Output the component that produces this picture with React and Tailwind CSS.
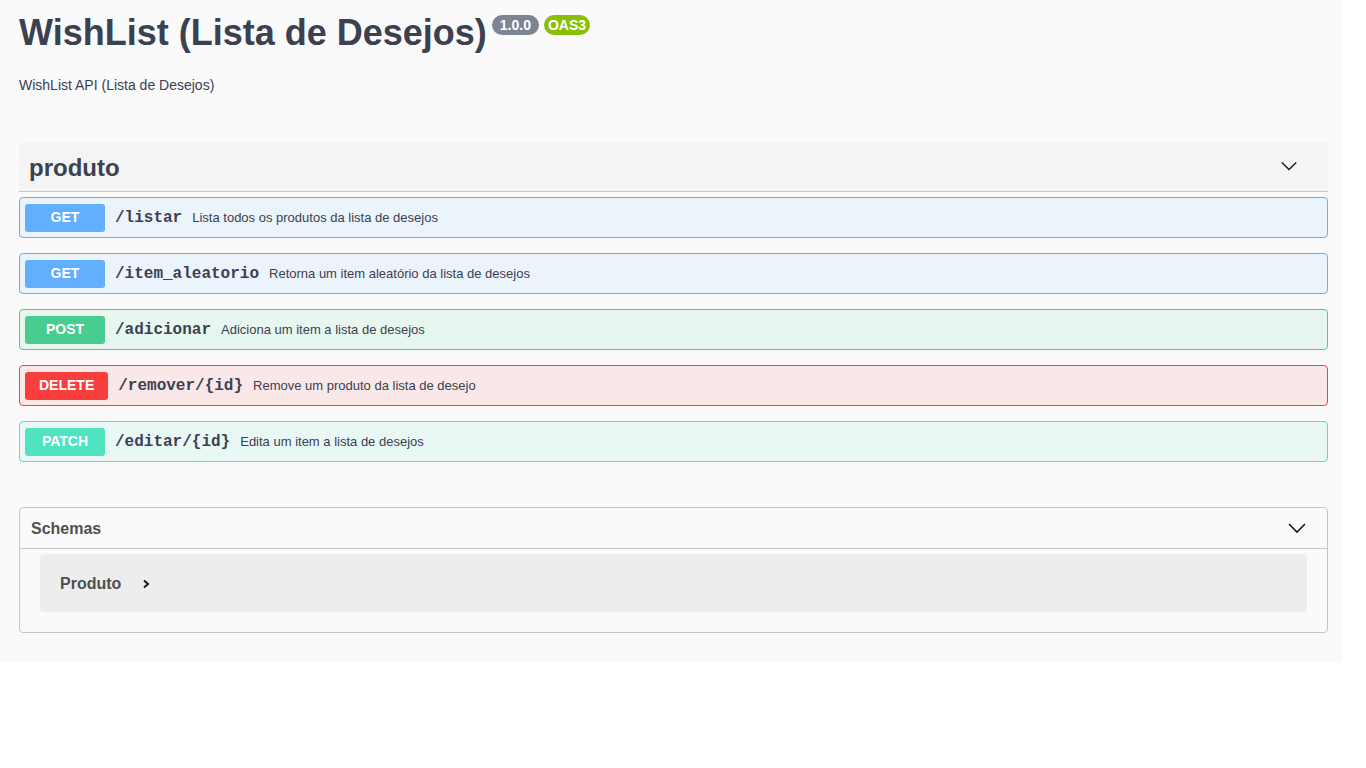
const ops = [
  { method: "GET", path: "/listar", desc: "Lista todos os produtos da lista de desejos", color: "border-[#61affe] bg-[#ebf3fb]", badge: "bg-[#61affe]" },
  { method: "GET", path: "/item_aleatorio", desc: "Retorna um item aleatório da lista de desejos", color: "border-[#61affe] bg-[#ebf3fb]", badge: "bg-[#61affe]" },
  { method: "POST", path: "/adicionar", desc: "Adiciona um item a lista de desejos", color: "border-[#49cc90] bg-[#e8f6f0]", badge: "bg-[#49cc90]" },
  { method: "DELETE", path: "/remover/{id}", desc: "Remove um produto da lista de desejo", color: "border-[#f93e3e] bg-[#fae7e7]", badge: "bg-[#f93e3e]" },
  { method: "PATCH", path: "/editar/{id}", desc: "Edita um item a lista de desejos", color: "border-[#50e3c2] bg-[#e9f8f5]", badge: "bg-[#50e3c2]" },
];

const ChevronDown = ({ className }) => (
  <svg className={className} viewBox="0 0 20 20" fill="none" stroke="#1a1a1a" strokeWidth="1.6">
    <path d="M2 6 L10 14 L18 6" />
  </svg>
);

const App = () => {
  return (
    <div className="bg-white min-h-[768px] font-['Liberation_Sans',Arial,sans-serif] text-[#3b4151]">
      <div className="w-[1342px] bg-[#fafafa] pl-[19px] pr-[14px] pt-[12px] pb-[29px]">
        <div className="flex items-start">
          <h2 className="text-[36px] font-bold leading-[41px]">WishList (Lista de Desejos)</h2>
          <span className="ml-[5px] mt-[3px] h-[20px] px-[8px] rounded-full bg-[#7d8492] text-white text-[14px] font-bold leading-[20px]">1.0.0</span>
          <span className="ml-[5px] mt-[3px] h-[20px] px-[4px] rounded-full bg-[#89bf04] text-white text-[14px] font-bold leading-[20px]">OAS3</span>
        </div>
        <p className="mt-[24px] text-[14px] leading-[16px]">WishList API (Lista de Desejos)</p>

        <div className="mt-[50px]">
          <div className="flex items-center justify-between h-[49px] bg-[#f4f4f4] border-b border-[#c4c6cb] pl-[10px] pr-[30px]">
            <span className="text-[24px] font-bold leading-[28px] mt-[1px]">produto</span>
            <ChevronDown className="w-[18px] h-[18px] -mt-[2px]" />
          </div>
          <div className="mt-[5px] flex flex-col gap-[15px]">
            {ops.map((op) => (
              <div key={op.path} className={`flex items-center h-[41px] border rounded-[4px] px-[5px] ${op.color}`}>
                <span className={`min-w-[80px] h-[28px] px-[14px] rounded-[3px] text-white text-[14px] font-bold flex items-center justify-center ${op.badge}`}>
                  {op.method}
                </span>
                <span className="ml-[10px] font-['Liberation_Mono','Courier_New',monospace] font-bold text-[16px]">{op.path}</span>
                <span className="ml-[10px] text-[13px]">{op.desc}</span>
              </div>
            ))}
          </div>
        </div>

        <div className="mt-[45px] border border-[#c4c6cb] rounded-[4px]">
          <div className="flex items-center justify-between h-[41px] border-b border-[#c4c6cb] pl-[11px] pr-[20px]">
            <span className="text-[16px] font-bold text-[#505050] mt-[1px]">Schemas</span>
            <ChevronDown className="w-[20px] h-[20px]" />
          </div>
          <div className="mx-[20px] mt-[5px] mb-[20px] h-[58px] rounded-[4px] bg-[#ededed] flex items-center pl-[20px]">
            <span className="text-[16px] font-bold text-[#505050] mt-[1px]">Produto</span>
            <svg className="ml-[20px] w-[10px] h-[10px] mt-[2px]" viewBox="0 0 10 10" fill="none" stroke="#1a1a1a" strokeWidth="2">
              <path d="M3 1.5 L7 5 L3 8.5" />
            </svg>
          </div>
        </div>
      </div>
    </div>
  );
};

export default App;
